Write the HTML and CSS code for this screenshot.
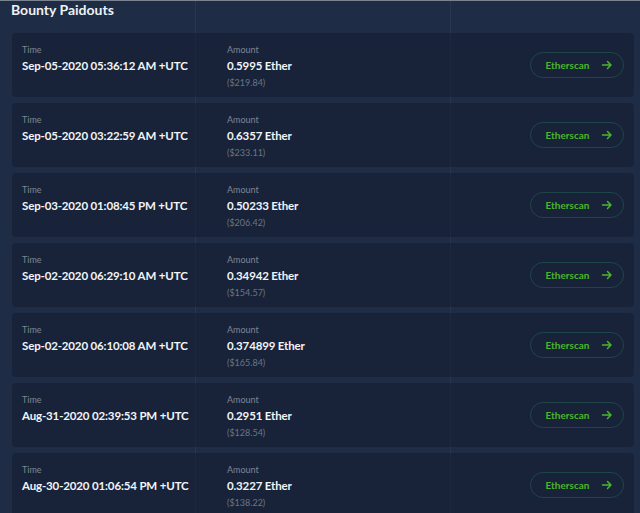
FILE: index.html
```html
<!DOCTYPE html>
<html lang="en">
<head>
    <meta charset="UTF-8">
    <meta name="viewport" content="width=device-width, initial-scale=1.0">
    <title>Bounty Paidouts</title>
    <link rel="stylesheet" href="styles.css">
</head>
<body>
    <div class="page">
        <h2 class="title">Bounty Paidouts</h2>
        <div class="list">
            <div class="card">
                <div class="col time">
                    <span class="label">Time</span>
                    <span class="value">Sep-05-2020 05:36:12 AM +UTC</span>
                </div>
                <div class="col amount">
                    <span class="label">Amount</span>
                    <span class="value">0.5995 Ether</span>
                    <span class="usd">($219.84)</span>
                </div>
                <a class="btn" href="#">Etherscan <svg width="12" height="12" viewBox="0 0 12 12"><path d="M1.5 6h8.5M6.5 2.5 10 6l-3.5 3.5" fill="none" stroke="currentColor" stroke-width="1.5" stroke-linecap="round" stroke-linejoin="round"/></svg></a>
            </div>
            <div class="card">
                <div class="col time">
                    <span class="label">Time</span>
                    <span class="value">Sep-05-2020 03:22:59 AM +UTC</span>
                </div>
                <div class="col amount">
                    <span class="label">Amount</span>
                    <span class="value">0.6357 Ether</span>
                    <span class="usd">($233.11)</span>
                </div>
                <a class="btn" href="#">Etherscan <svg width="12" height="12" viewBox="0 0 12 12"><path d="M1.5 6h8.5M6.5 2.5 10 6l-3.5 3.5" fill="none" stroke="currentColor" stroke-width="1.5" stroke-linecap="round" stroke-linejoin="round"/></svg></a>
            </div>
            <div class="card">
                <div class="col time">
                    <span class="label">Time</span>
                    <span class="value">Sep-03-2020 01:08:45 PM +UTC</span>
                </div>
                <div class="col amount">
                    <span class="label">Amount</span>
                    <span class="value">0.50233 Ether</span>
                    <span class="usd">($206.42)</span>
                </div>
                <a class="btn" href="#">Etherscan <svg width="12" height="12" viewBox="0 0 12 12"><path d="M1.5 6h8.5M6.5 2.5 10 6l-3.5 3.5" fill="none" stroke="currentColor" stroke-width="1.5" stroke-linecap="round" stroke-linejoin="round"/></svg></a>
            </div>
            <div class="card">
                <div class="col time">
                    <span class="label">Time</span>
                    <span class="value">Sep-02-2020 06:29:10 AM +UTC</span>
                </div>
                <div class="col amount">
                    <span class="label">Amount</span>
                    <span class="value">0.34942 Ether</span>
                    <span class="usd">($154.57)</span>
                </div>
                <a class="btn" href="#">Etherscan <svg width="12" height="12" viewBox="0 0 12 12"><path d="M1.5 6h8.5M6.5 2.5 10 6l-3.5 3.5" fill="none" stroke="currentColor" stroke-width="1.5" stroke-linecap="round" stroke-linejoin="round"/></svg></a>
            </div>
            <div class="card">
                <div class="col time">
                    <span class="label">Time</span>
                    <span class="value">Sep-02-2020 06:10:08 AM +UTC</span>
                </div>
                <div class="col amount">
                    <span class="label">Amount</span>
                    <span class="value">0.374899 Ether</span>
                    <span class="usd">($165.84)</span>
                </div>
                <a class="btn" href="#">Etherscan <svg width="12" height="12" viewBox="0 0 12 12"><path d="M1.5 6h8.5M6.5 2.5 10 6l-3.5 3.5" fill="none" stroke="currentColor" stroke-width="1.5" stroke-linecap="round" stroke-linejoin="round"/></svg></a>
            </div>
            <div class="card">
                <div class="col time">
                    <span class="label">Time</span>
                    <span class="value">Aug-31-2020 02:39:53 PM +UTC</span>
                </div>
                <div class="col amount">
                    <span class="label">Amount</span>
                    <span class="value">0.2951 Ether</span>
                    <span class="usd">($128.54)</span>
                </div>
                <a class="btn" href="#">Etherscan <svg width="12" height="12" viewBox="0 0 12 12"><path d="M1.5 6h8.5M6.5 2.5 10 6l-3.5 3.5" fill="none" stroke="currentColor" stroke-width="1.5" stroke-linecap="round" stroke-linejoin="round"/></svg></a>
            </div>
            <div class="card">
                <div class="col time">
                    <span class="label">Time</span>
                    <span class="value">Aug-30-2020 01:06:54 PM +UTC</span>
                </div>
                <div class="col amount">
                    <span class="label">Amount</span>
                    <span class="value">0.3227 Ether</span>
                    <span class="usd">($138.22)</span>
                </div>
                <a class="btn" href="#">Etherscan <svg width="12" height="12" viewBox="0 0 12 12"><path d="M1.5 6h8.5M6.5 2.5 10 6l-3.5 3.5" fill="none" stroke="currentColor" stroke-width="1.5" stroke-linecap="round" stroke-linejoin="round"/></svg></a>
            </div>
        </div>
    </div>
</body>
</html>
```

FILE: styles.css
```css
*{
    margin: 0;
    padding: 0;
    box-sizing: border-box;
}
html,body{
    width: 100%;
    height: 100%;
    overflow: hidden;
}
body{
    font-family: Lato, "Noto Sans", sans-serif;
    color: #eef1f5;
    background-color: #1e2c45;
    /* faint grid lines of the page behind */
    background-image:
        linear-gradient(to right, transparent 195px, rgba(255,255,255,0.05) 195px, rgba(255,255,255,0.05) 196px, transparent 196px),
        linear-gradient(to right, transparent 450px, rgba(255,255,255,0.05) 450px, rgba(255,255,255,0.05) 451px, transparent 451px);
    border-top: 1px solid #7a838f;
}
.page{
    padding: 0 6px 0 12px;
}
.title{
    font-size: 14px;
    font-weight: 700;
    line-height: 17px;
    margin-left: -1px;
    height: 32px;
}
.list{
    display: flex;
    flex-direction: column;
    gap: 6px;
}
.card{
    height: 64px;
    display: flex;
    align-items: center;
    padding: 0 10px;
    background-color: rgba(20, 30, 48, 0.55);
    border-radius: 4px;
}
.col{
    display: flex;
    flex-direction: column;
    align-self: flex-start;
    padding-top: 11px;
}
.time{
    width: 205px;
}
.amount{
    flex: 1;
}
.label{
    font-size: 9px;
    line-height: 12px;
    color: #7c8696;
}
.value{
    font-size: 11.5px;
    font-weight: 700;
    line-height: 19px;
    letter-spacing: -0.15px;
    color: #f2f4f7;
}
.usd{
    font-size: 9px;
    line-height: 16px;
    color: #6b7586;
}
.btn{
    width: 94px;
    height: 26px;
    display: flex;
    align-items: center;
    justify-content: center;
    gap: 12px;
    padding-left: 5px;
    border: 1.5px solid #1e4649;
    border-radius: 13px;
    color: #4cb52c;
    font-size: 10px;
    font-weight: 700;
    text-decoration: none;
}
```
